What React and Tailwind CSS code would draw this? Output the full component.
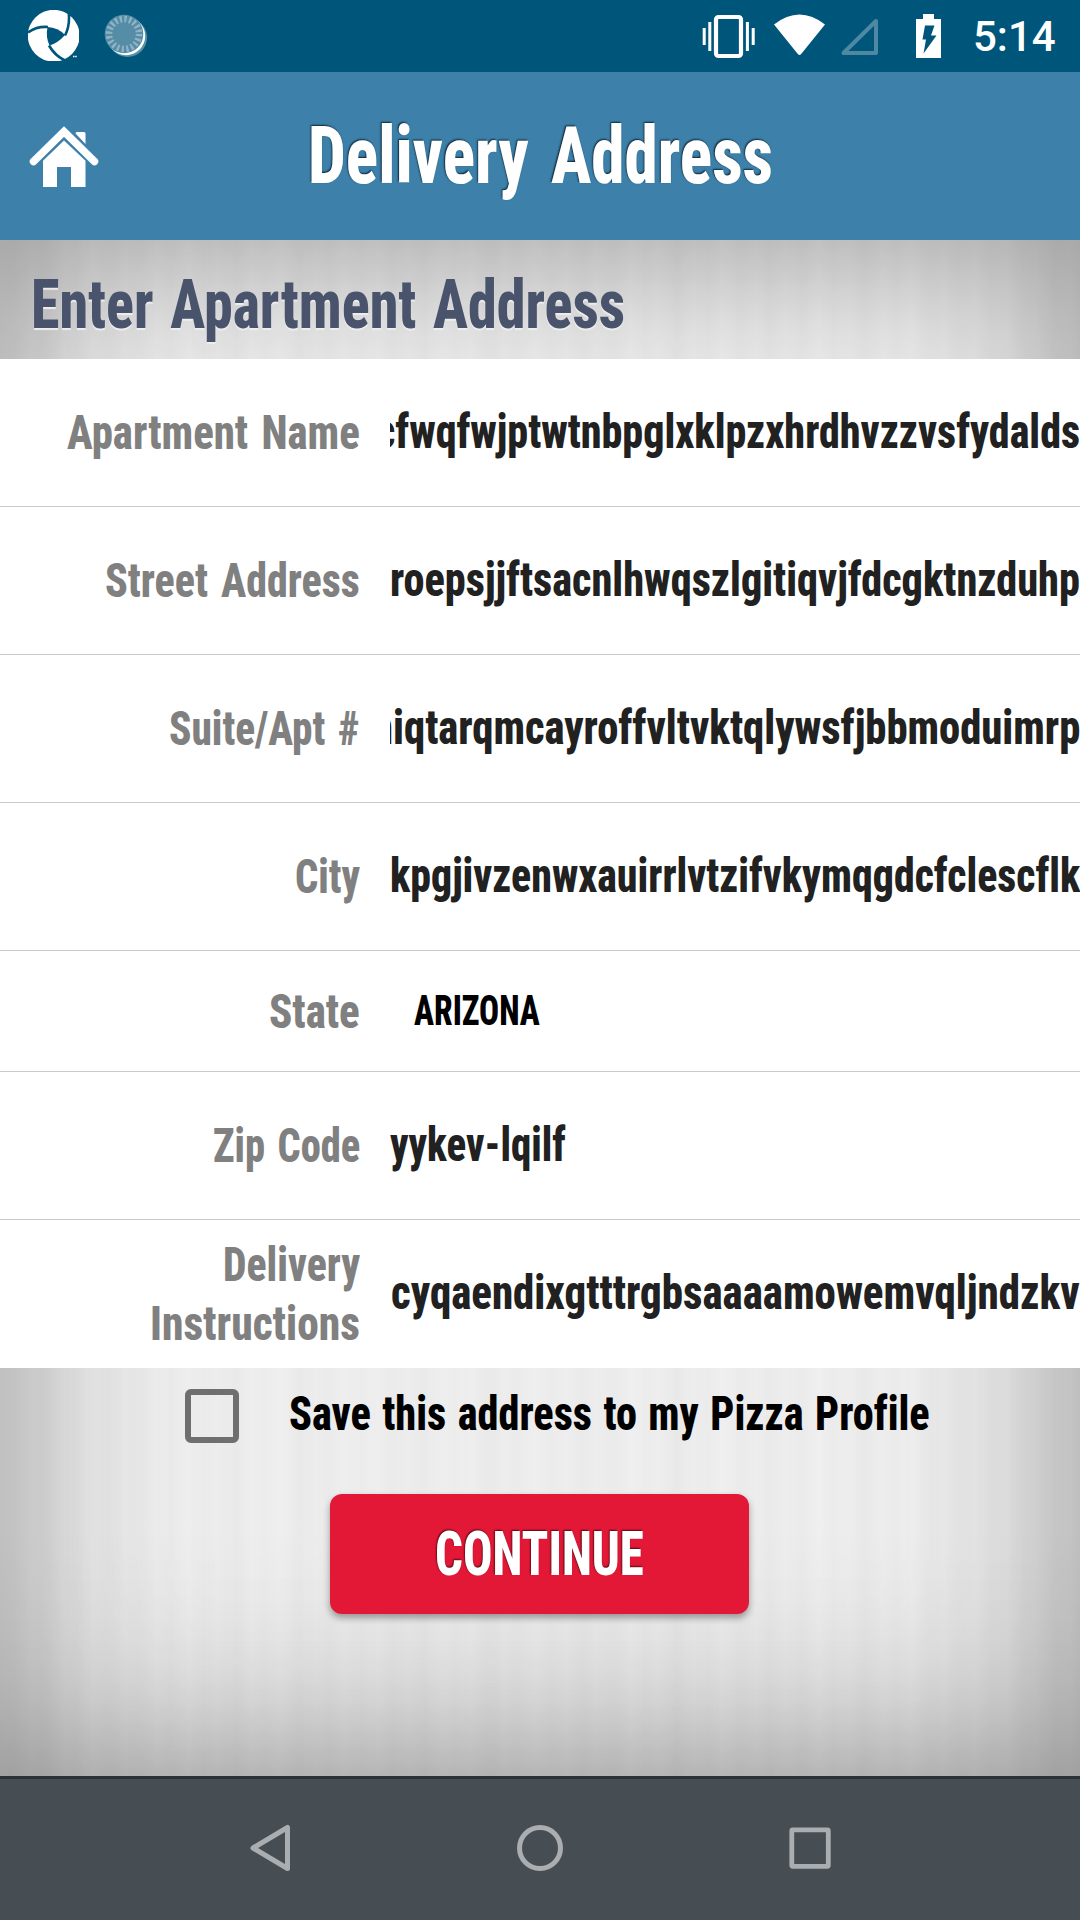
import React, { useLayoutEffect, useRef, useState } from "react";

// Single-line text condensed horizontally to fill the width of its box.
function Condensed({ children, className = "" }) {
  const outer = useRef(null);
  const inner = useRef(null);
  const [scale, setScale] = useState(1);
  useLayoutEffect(() => {
    const fit = () => setScale(outer.current.clientWidth / inner.current.offsetWidth);
    fit();
    document.fonts?.ready.then(fit);
  }, []);
  return (
    <span ref={outer} className={`block shrink-0 ${className}`}>
      <span
        ref={inner}
        className="block w-max origin-left whitespace-nowrap"
        style={{ transform: `scaleX(${scale})` }}
      >
        {children}
      </span>
    </span>
  );
}

function StatusBar() {
  return (
    <div className="flex h-[72px] items-center bg-[#00567a] pr-[23px] pl-[28px]">
      <svg className="h-[72px] w-[52px]" viewBox="28 0 52 72">
        <clipPath id="disc"><rect x="28" y="10" width="51" height="51" /></clipPath>
        <g clipPath="url(#disc)">
          <circle cx="53.7" cy="35.7" r="25.9" fill="#fff" />
          <path d="M47.5 27 Q58 27.500 65 35 Q58 43 49.500 45.500 Q45.500 37 47.500 27Z" fill="#00567a" />
          <g fill="none" stroke="#00567a" strokeWidth="2.6">
            <path d="M28 32.500 Q37 26 48 27" />
            <path d="M68.500 10 Q70.500 25 65 35.500" />
            <path d="M49 45.500 Q55 56 66 61" />
          </g>
        </g>
        <path d="M73 56.500h4" stroke="#fff" strokeWidth="1.500" strokeDasharray="1.500 .7" />
      </svg>
      <svg className="ml-[22px] h-[72px] w-[48px]" viewBox="102 0 48 72">
        <circle cx="127.500" cy="37.500" r="19.500" fill="#fff" opacity=".35" />
        <circle cx="126" cy="36" r="19.200" fill="#fff" />
        <circle cx="124" cy="34" r="19.300" fill="#568da6" />
        <circle cx="124" cy="34" r="15" fill="none" stroke="#8fb4c5" strokeWidth="6.500" strokeDasharray="2.200 2.512" />
      </svg>
      <div className="ml-auto flex items-center">
        <svg className="h-[72px] w-[240px]" viewBox="702 0 240 72">
          <rect x="716" y="17" width="25" height="39" rx="2.500" fill="none" stroke="#fff" strokeWidth="4.200" />
          <path d="M704.200 28v17M709.800 22v29M747.400 22v29M753.200 28v17" stroke="#fff" strokeWidth="3" />
          <path d="M774 24.500 Q799.500 4.500 825 24.500 L802 53 Q799.500 57 797 53Z" fill="#fff" />
          <path d="M843.500 53 L876 53 L876 21Z" fill="none" stroke="#4f88a3" strokeWidth="4" strokeLinejoin="round" />
          <path d="M923 14h11v5h7v39h-25V19h7z" fill="#fff" />
          <path d="M925 25.500h9.500l-3.500 10h5.500L923.500 53.500l2.500-14h-3.500z" fill="#00567a" />
        </svg>
        <span className="ml-[31px] w-[84px] pt-[2px] text-[42px] leading-[72px] font-medium text-white">5:14</span>
      </div>
    </div>
  );
}

function Header() {
  return (
    <header className="grid h-[168px] grid-cols-[308px_1fr_304px] items-center bg-[#3d81aa]">
      <svg className="ml-[28px] h-[70px] w-[72px]" viewBox="28 121 72 70">
        <path d="M75.500 133.500q0-1.500 1.500-1.500h7q1.500 0 1.500 1.500v10.500z" fill="#fff" />
        <path d="M33.500 161.500 L64 131.500 L94.500 161.500" fill="none" stroke="#fff" strokeWidth="7.500" strokeLinecap="round" />
        <path d="M43 187V160.800L64 140.500L85.500 160.800V187H71V167H57V187z" fill="#fff" />
      </svg>
      <h1 className="text-[80px] leading-[100px] font-extrabold text-white [font-stretch:75%] [word-spacing:8px] [text-shadow:-1px_-1px_2px_#0b2433]">
        <Condensed className="w-[465px]">Delivery Address</Condensed>
      </h1>
    </header>
  );
}

function Row({ label, tall = true, last = false, children }) {
  return (
    <div
      className={`flex items-center bg-white ${tall ? "h-[148px]" : "h-[121px]"} ${last ? "" : "border-b border-[#cacaca]"}`}
    >
      <div className="flex w-[360px] shrink-0 flex-col items-end leading-[59px] text-[#808080]">{label}</div>
      <div className="ml-[30px] flex-1 overflow-hidden text-[#212121]">{children}</div>
    </div>
  );
}

const value = "pb-[2px] leading-[70px]";

export default function App() {
  return (
    <div className="flex h-[1920px] w-[1080px] flex-col overflow-hidden font-[Roboto,sans-serif] [font-variant-ligatures:none]">
      <StatusBar />
      <Header />
      <main className="flex h-[1536px] flex-col bg-[#efefef] bg-[linear-gradient(0deg,rgba(0,0,0,0.05)_0px,transparent_250px),repeating-linear-gradient(90deg,transparent_0px,rgba(0,0,0,0.01)_14px,transparent_30px,rgba(0,0,0,0.014)_47px,transparent_63px),repeating-linear-gradient(90deg,transparent_0px,rgba(0,0,0,0.01)_40px,transparent_91px)] text-[49px] font-extrabold shadow-[inset_0_0_180px_rgba(0,0,0,0.4)] [font-stretch:75%] [word-spacing:4px]">
        <h2 className="h-[119px] pt-[6px] pl-[31px] text-[68px] leading-[119px] text-[#49546c] [text-shadow:0_2px_1px_#eeeeee]">
          <Condensed className="w-[594px]">Enter Apartment Address</Condensed>
        </h2>
        <Row label={<Condensed className="w-[293px]">Apartment Name</Condensed>}>
          <div className={`flex justify-end ${value}`}>
            <Condensed className="w-[704px]">cfwqfwjptwtnbpglxklpzxhrdhvzzvsfydalds</Condensed>
          </div>
        </Row>
        <Row label={<Condensed className="w-[255px]">Street Address</Condensed>}>
          <div className={value}>
            <Condensed className="w-[690px]">roepsjjftsacnlhwqszlgitiqvjfdcgktnzduhp</Condensed>
          </div>
        </Row>
        <Row label={<Condensed className="w-[191px]">Suite/Apt #</Condensed>}>
          <div className={`flex justify-end ${value}`}>
            <Condensed className="w-[708px]">niqtarqmcayroffvltvktqlywsfjbbmoduimrp</Condensed>
          </div>
        </Row>
        <Row label={<Condensed className="w-[65px]">City</Condensed>}>
          <div className={value}>
            <Condensed className="w-[690px]">kpgjivzenwxauirrlvtzifvkymqgdcfclescflk</Condensed>
          </div>
        </Row>
        <Row tall={false} label={<Condensed className="w-[91px]">State</Condensed>}>
          <div className="pl-[24px] text-[42px] leading-[70px] text-black">
            <Condensed className="w-[126px]">ARIZONA</Condensed>
          </div>
        </Row>
        <Row label={<Condensed className="w-[147px]">Zip Code</Condensed>}>
          <div className={value}>
            <Condensed className="w-[176px]">yykev-lqilf</Condensed>
          </div>
        </Row>
        <Row
          last
          label={
            <>
              <Condensed className="w-[137px]">Delivery</Condensed>
              <Condensed className="w-[210px]">Instructions</Condensed>
            </>
          }
        >
          <div className={`pl-px ${value}`}>
            <Condensed className="w-[689px]">cyqaendixgtttrgbsaaaamowemvqljndzkv</Condensed>
          </div>
        </Row>
        <div className="mt-[16px] flex h-[64px] items-center pl-[185px] leading-[64px] text-black">
          <span className="size-[54px] rounded-[6px] border-[6px] border-[#6f6f6f]" />
          <Condensed className="-mt-[4px] ml-[50px] w-[641px] [word-spacing:2px]">Save this address to my Pizza Profile</Condensed>
        </div>
        <button className="mt-[46px] ml-[330px] flex h-[120px] w-[419px] items-center justify-center rounded-[12px] bg-[#e31837] text-[62px] leading-[100px] text-white shadow-[0_4px_7px_rgba(0,0,0,0.35)] [text-shadow:-1px_-1px_2px_#4d0812]">
          <Condensed className="w-[209px]">CONTINUE</Condensed>
        </button>
      </main>
      <nav className="h-[144px] border-t-[3px] border-[#2c3135] bg-[#464d53]">
        <div className="flex h-[138px] items-center justify-center gap-[218px]">
          <svg className="h-[52px] w-[52px]" viewBox="244 1822 52 52">
            <path d="M253 1848 L287.500 1827.500 V1868.500Z" fill="none" stroke="#abaeb0" strokeWidth="5" strokeLinejoin="round" />
          </svg>
          <svg className="h-[52px] w-[52px]" viewBox="514 1822 52 52">
            <circle cx="540" cy="1848" r="20.500" fill="none" stroke="#abaeb0" strokeWidth="5" />
          </svg>
          <svg className="h-[52px] w-[52px]" viewBox="784 1822 52 52">
            <rect x="791.800" y="1829.800" width="36.500" height="36.500" rx="1" fill="none" stroke="#abaeb0" strokeWidth="4.800" />
          </svg>
        </div>
      </nav>
    </div>
  );
}
